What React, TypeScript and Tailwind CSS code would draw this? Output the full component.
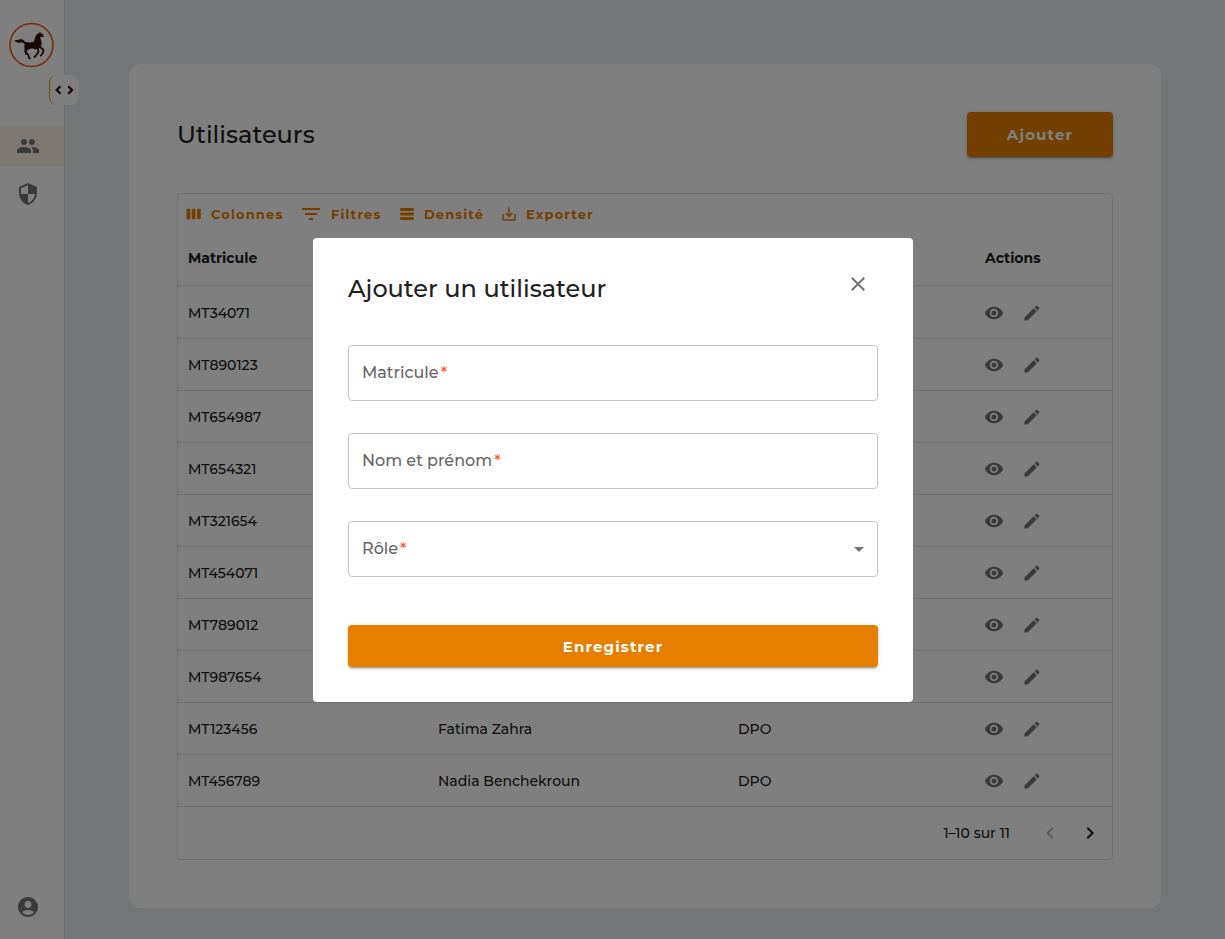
import React from 'react';

const icons = {
  people: 'M16 11c1.66 0 2.99-1.34 2.99-3S17.66 5 16 5s-3 1.34-3 3 1.34 3 3 3m-8 0c1.66 0 2.99-1.34 2.99-3S9.66 5 8 5 5 6.34 5 8s1.34 3 3 3m0 2c-2.33 0-7 1.17-7 3.5V19h14v-2.5c0-2.33-4.67-3.5-7-3.5m8 0c-.29 0-.62.02-.97.05 1.16.84 1.97 1.97 1.97 3.45V19h6v-2.5c0-2.33-4.67-3.5-7-3.5z',
  security: 'M12 1L3 5v6c0 5.55 3.84 10.74 9 12 5.16-1.26 9-6.45 9-12V5l-9-4zm0 10.99h7c-.53 4.12-3.28 7.79-7 8.94V12H5V6.3l7-3.11v8.8z',
  account: 'M12 2C6.48 2 2 6.48 2 12s4.48 10 10 10 10-4.48 10-10S17.52 2 12 2zm0 4c1.93 0 3.5 1.57 3.5 3.5S13.93 13 12 13s-3.5-1.57-3.5-3.5S10.07 6 12 6zm0 14c-2.03 0-4.43-.82-6.14-2.88C7.55 15.8 9.68 15 12 15s4.45.8 6.14 2.12C16.43 19.18 14.03 20 12 20z',
  columns: 'M6 5H3c-.55 0-1 .45-1 1v12c0 .55.45 1 1 1h3c.55 0 1-.45 1-1V6c0-.55-.45-1-1-1zm14 0h-3c-.55 0-1 .45-1 1v12c0 .55.45 1 1 1h3c.55 0 1-.45 1-1V6c0-.55-.45-1-1-1zm-7 0h-3c-.55 0-1 .45-1 1v12c0 .55.45 1 1 1h3c.55 0 1-.45 1-1V6c0-.55-.45-1-1-1z',
  filter: 'M10 18h4v-2h-4v2zM3 6v2h18V6H3zm3 7h12v-2H6v2z',
  density: 'M21 8H3V4h18v4zm0 2H3v4h18v-4zm0 6H3v4h18v-4z',
  download: 'M19 12v7H5v-7H3v7c0 1.1.9 2 2 2h14c1.1 0 2-.9 2-2v-7h-2zm-6 .67l2.59-2.58L17 11.5l-5 5-5-5 1.41-1.41L11 12.67V3h2z',
  eye: 'M12 4.5C7 4.5 2.73 7.61 1 12c1.73 4.39 6 7.5 11 7.5s9.27-3.11 11-7.5c-1.73-4.39-6-7.5-11-7.5M12 17c-2.76 0-5-2.24-5-5s2.24-5 5-5 5 2.24 5 5-2.24 5-5 5m0-8c-1.66 0-3 1.34-3 3s1.34 3 3 3 3-1.34 3-3-1.34-3-3-3',
  edit: 'M3 17.25V21h3.75L17.81 9.94l-3.75-3.75zM20.71 7.04c.39-.39.39-1.02 0-1.41l-2.34-2.34a.996.996 0 0 0-1.41 0l-1.83 1.83 3.75 3.75z',
  left: 'M15.41 16.59 10.83 12l4.58-4.59L14 6l-6 6 6 6z',
  right: 'M8.59 16.59 13.17 12 8.59 7.41 10 6l6 6-6 6z',
  close: 'M19 6.41 17.59 5 12 10.59 6.41 5 5 6.41 10.59 12 5 17.59 6.41 19 12 13.41 17.59 19 19 17.59 13.41 12z',
  caret: 'M7 10l5 5 5-5z',
};

function Icon({ name, className }: { name: keyof typeof icons; className: string }) {
  return (
    <svg viewBox="0 0 24 24" fill="currentColor" className={`shrink-0 ${className}`} aria-hidden="true">
      <path d={icons[name]} />
    </svg>
  );
}

function Logo() {
  return (
    <svg viewBox="0 0 46 46" className="h-[46px] w-[46px]" aria-label="Logo">
      <circle cx="23.5" cy="23" r="21.5" fill="none" stroke="#e85a14" strokeWidth="1.6" />
      <path
        fill="#330d08"
        d="M6.300 18c2.500.6 4.500-.9 7-.7 1.800.2 2.900 1.200 3.900 2.700 2.800.5 5.700.5 8.400 0 1.200-1.900 1.100-4.200 2.200-6.200.8-1.500 2-2.400 3.500-2.900l.6-1.200.8 1.300c1.400.5 2.500 1.500 3.200 2.900l-.9 1-2.600-.1c-.4 1.800 1.200 4 1.300 6 .1 2-.6 3.800-1.800 5-1.900 1.500-3.900 1.600-5.800 1.100-2.200-.6-3.900-.4-5.400.5-1.600.9-3.500.6-4.100-.9-.4-1.500-.3-2.900 0-4.200-1-1.600-2.200-2.100-3.900-1.800-2.300.5-5.200.1-6.400-2.500z"
      />
      <g fill="none" stroke="#330d08" strokeWidth="1.7" strokeLinejoin="round" strokeLinecap="round">
        <path d="M18 25 17 29.500l3.300 3.300.5 3 1.200.6" />
        <path d="M20.500 26 18 28.500l-.2 3.500" />
        <path d="M29.500 25.500l1 4.500-2.800 4-1.200 1" />
        <path d="M31.500 24.500l4 3.500-.8 3.500-2 2.200" />
      </g>
    </svg>
  );
}

const rows: [string, string, string][] = [
  ['MT34071', '', ''],
  ['MT890123', '', ''],
  ['MT654987', '', ''],
  ['MT654321', '', ''],
  ['MT321654', '', ''],
  ['MT454071', '', ''],
  ['MT789012', '', ''],
  ['MT987654', '', ''],
  ['MT123456', 'Fatima Zahra', 'DPO'],
  ['MT456789', 'Nadia Benchekroun', 'DPO'],
];

function Field({ label, select }: { label: string; select?: boolean }) {
  return (
    <div className="flex h-14 items-center justify-between rounded border border-[#c4c4c4] pr-[6px] pl-[13px]">
      <span className="flex text-base leading-6 font-medium text-[#666666]">
        <span>{label}</span>
        <span className="ml-[2px] text-[#ff5630]">*</span>
      </span>
      {select && <Icon name="caret" className="h-6 w-6 text-[#757575]" />}
    </div>
  );
}

export default function App() {
  return (
    <div className="relative flex h-[939px] w-[1225px] overflow-hidden bg-[#e6eaee] font-['Montserrat','Inter',sans-serif] text-[#212121]">
      <aside className="relative flex w-[65px] shrink-0 flex-col border-r border-[#d9dce1] bg-white text-[#757575]">
        <div className="mt-[22px] ml-2"><Logo /></div>
        <div className="mt-[58px] flex h-10 items-center bg-[#faf0e4] pl-4">
          <Icon name="people" className="h-6 w-6" />
        </div>
        <div className="mt-2 flex h-10 items-center pl-4">
          <Icon name="security" className="h-6 w-6" />
        </div>
        <div className="mt-auto mb-5 pl-4"><Icon name="account" className="h-6 w-6" /></div>
        <div className="absolute top-[75px] left-[49px] flex h-[30px] w-[30px] items-center justify-center rounded-lg border-l border-[#e69a00] bg-white text-[#330d08]">
          <svg viewBox="0 0 20 12" className="h-3 w-5" fill="none" stroke="currentColor" strokeWidth="2.3">
            <path d="M5.500 2.200 1.700 6l3.800 3.800M13.200 2.200 17 6l-3.800 3.800" />
          </svg>
        </div>
      </aside>

      <main className="mt-16 ml-16 flex h-[844px] w-[1032px] flex-col rounded-xl bg-white px-12 pt-12">
        <div className="flex h-[45px] items-center justify-between">
          <h1 className="text-2xl font-medium">Utilisateurs</h1>
          <button className="h-[45px] w-[146px] rounded bg-[#e67e00] pt-px text-[15px] font-bold tracking-[1.15px] text-white shadow-[0_3px_1px_-2px_rgba(0,0,0,0.2),0_2px_2px_0_rgba(0,0,0,0.14),0_1px_5px_0_rgba(0,0,0,0.12)]">
            Ajouter
          </button>
        </div>

        <section className="mt-9 flex h-[667px] w-[936px] flex-col rounded border border-[#e0e0e0] text-sm font-medium">
          <div className="flex h-[41px] items-center pl-[7px] text-[13px] font-bold text-[#e67e00]">
            <Icon name="columns" className="-mt-px h-[18px] w-[18px]" />
            <span className="ml-2 w-[88px] tracking-[1.15px]">Colonnes</span>
            <Icon name="filter" className="-mt-px h-6 w-6" />
            <span className="ml-2 w-[67px] tracking-[1.15px]">Filtres</span>
            <Icon name="density" className="-mt-px h-[18px] w-[18px]" />
            <span className="ml-2 w-[76px] tracking-[1.1px]">Densité</span>
            <Icon name="download" className="-mt-px h-[18px] w-[18px]" />
            <span className="ml-2 tracking-[1.1px]">Exporter</span>
          </div>
          <div className="flex h-[51px] items-start border-b border-[#e0e0e0] pt-[13px] pl-[10px] font-bold leading-5">
            <span className="w-[797px]">Matricule</span>
            <span>Actions</span>
          </div>
          {rows.map(([id, name, role]) => (
            <div key={id} className="flex h-[52px] items-center border-b border-[#e0e0e0] pl-[10px] nth-[3]:h-[53px] nth-[3]:pt-px">
              <span className="w-[250px]">{id}</span>
              <span className="w-[300px]">{name}</span>
              <span className="w-[246px]">{role}</span>
              <span className="flex gap-[18px] text-[#757575]">
                <Icon name="eye" className="h-5 w-5" />
                <Icon name="edit" className="h-5 w-5" />
              </span>
            </div>
          ))}
          <div className="flex h-[52px] items-center justify-end pr-[10px]">
            <span className="mr-[28px]">1–10 sur 11</span>
            <Icon name="left" className="mr-4 h-6 w-6 text-[#bdbdbd]" />
            <Icon name="right" className="h-6 w-6" />
          </div>
        </section>
      </main>

      <div className="absolute inset-0 flex items-center justify-center bg-black/50 pl-px">
        <div className="flex h-[464px] w-[600px] flex-col rounded bg-white px-[35px] text-[#212121]">
          <div className="mt-[34px] flex h-8 items-start justify-between pr-2">
            <h2 className="pt-px text-2xl leading-8 font-medium">Ajouter un utilisateur</h2>
            <Icon name="close" className="h-6 w-6 text-[#757575]" />
          </div>
          <div className="mt-[41px] flex flex-col gap-8">
            <Field label="Matricule" />
            <Field label="Nom et prénom" />
            <Field label="Rôle" select />
          </div>
          <button className="mt-12 h-[42px] rounded bg-[#e67e00] pt-[3px] text-[15px] font-bold tracking-[1.15px] text-white shadow-[0_3px_1px_-2px_rgba(0,0,0,0.2),0_2px_2px_0_rgba(0,0,0,0.14),0_1px_5px_0_rgba(0,0,0,0.12)]">
            Enregistrer
          </button>
        </div>
      </div>
    </div>
  );
}
